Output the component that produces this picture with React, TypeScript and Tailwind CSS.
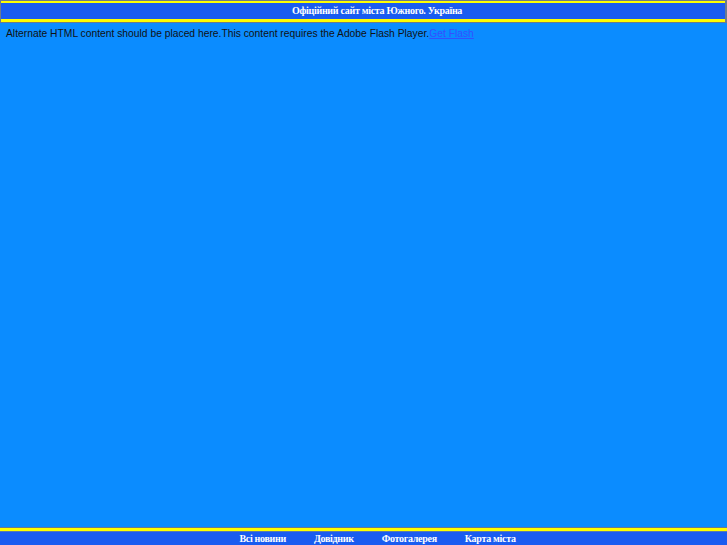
const navItems = ['Всі новини', 'Довідник', 'Фотогалерея', 'Карта міста'];

export default function App() {
  return (
    <div className="h-[545px] w-[727px] overflow-hidden bg-[#0b8cff] flex flex-col">
      <header className="border-l border-t border-r-2 border-[#6b7a8f] bg-[#ffff00] pt-[2px] pb-[3px]">
        <div className="h-[16px] bg-[#1a5cf0] flex items-center justify-center pl-[28px]">
          <span className="text-[10px] tracking-[-0.3px] font-bold text-white leading-none font-['Liberation_Serif',serif]">
            Офіційний сайт міста Южного. Україна
          </span>
        </div>
      </header>
      <div className="h-px bg-[#6b7a8f]" />
      <main className="flex-1 px-[6px] pt-[4px]">
        <p className="text-[10.3px] leading-[13px] text-[#111] font-['Liberation_Sans',sans-serif]">
          Alternate HTML content should be placed here.This content requires the Adobe Flash Player.
          <a href="#" className="text-[#3350ff] underline">Get Flash</a>
        </p>
      </main>
      <footer className="border-t border-[#6b7a8f]">
        <div className="h-[3px] bg-[#ffff00]" />
        <nav className="h-[14px] bg-[#1a5cf0] flex items-center justify-center gap-[28px] pl-[28px] border-t border-[#5a7ab0]">
          {navItems.map((item) => (
            <a key={item} href="#" className="text-[10px] tracking-[-0.3px] font-bold text-white leading-none font-['Liberation_Serif',serif]">
              {item}
            </a>
          ))}
        </nav>
      </footer>
    </div>
  );
}
